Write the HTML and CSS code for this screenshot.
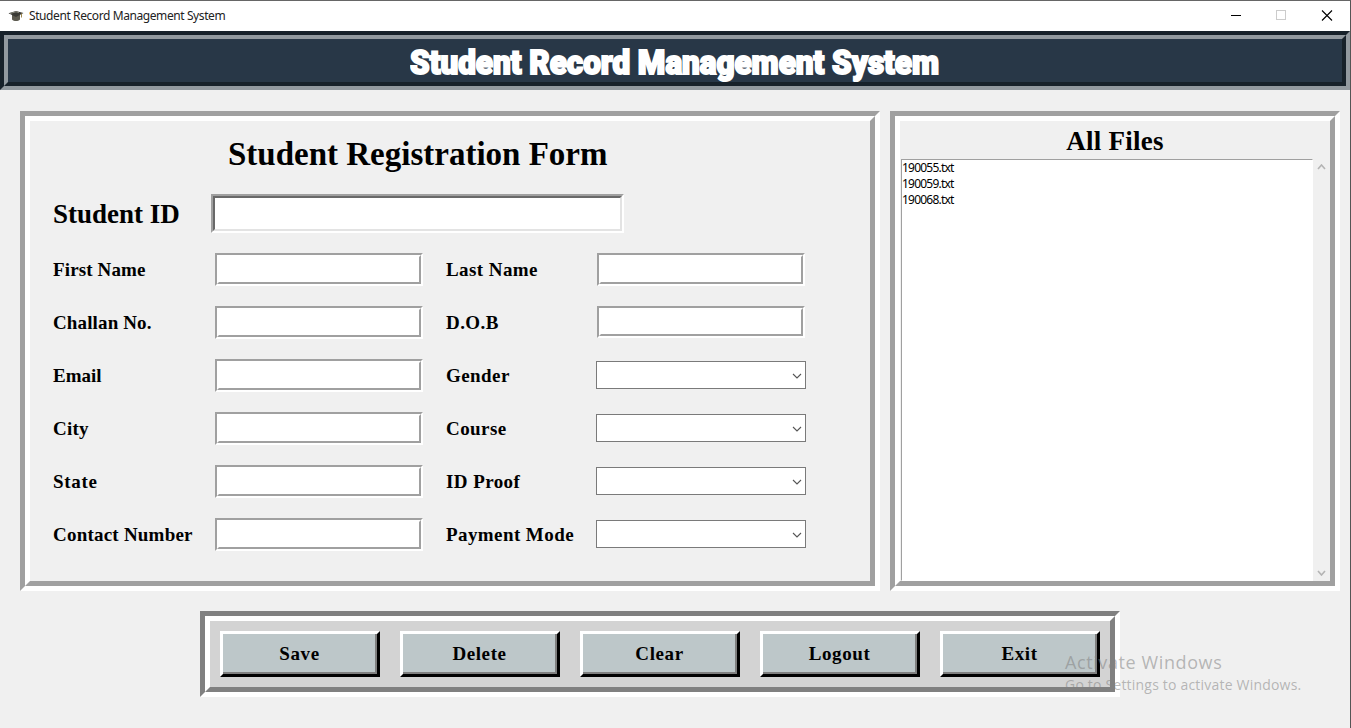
FILE: index.html
```html
<!DOCTYPE html>
<html lang="en">
<head>
<meta charset="utf-8">
<title>Student Record Management System</title>
<link rel="stylesheet" href="styles.css">
</head>
<body>
<div class="window">
  <div class="titlebar">
    <svg class="app-icon" width="16" height="13" viewBox="0 0 16 13"><path d="M4 5v4.500c2 2 6 2 8 0V5z" fill="#5d5b50"/><path d="M.5 3.300 8 1l7.500 2L8 7z" fill="#3a3a35"/><path d="M2 3.500 8 1.800l3 .8" stroke="#85857a" fill="none"/><path d="M13.500 3.500v4" stroke="#a08a50"/></svg>
    <span class="app-name">Student Record Management System</span>
    <svg class="controls" width="120" height="30" viewBox="0 0 120 30" fill="none" shape-rendering="crispEdges"><path d="M1 14.500h10" stroke="#000"/><path d="M46.500 9.500h9v9h-9z" stroke="#ccc"/><path d="m92 9.500 10 10m0-10-10 10" stroke="#000" stroke-width="1.100" shape-rendering="auto"/></svg>
  </div>
  <header class="banner"><div class="banner-in"><h1>Student Record Management System</h1></div></header>
  <main class="panels">
    <section class="groove form-panel"><div class="groove-in">
      <h2 class="form-title"><span>Student Registration Form</span></h2>
      <div class="id-row"><label class="id-label"><span>Student ID</span></label><div class="id-input"><div></div></div></div>
      <div class="fields">
        <label class="w1">First Name</label><div class="entry"><div></div></div><label class="w3">Last Name</label><div class="entry right"><div></div></div>
        <label class="w1">Challan No.</label><div class="entry"><div></div></div><label class="w3">D.O.B</label><div class="entry right short"><div></div></div>
        <label>Email</label><div class="entry"><div></div></div><label class="w3">Gender</label><div class="combo"><svg width="10" height="6" viewBox="0 0 10 6"><path d="m1 1 4 4 4-4"/></svg></div>
        <label class="w2">City</label><div class="entry"><div></div></div><label class="w3">Course</label><div class="combo"><svg width="10" height="6" viewBox="0 0 10 6"><path d="m1 1 4 4 4-4"/></svg></div>
        <label class="w4">State</label><div class="entry"><div></div></div><label class="w3">ID Proof</label><div class="combo"><svg width="10" height="6" viewBox="0 0 10 6"><path d="m1 1 4 4 4-4"/></svg></div>
        <label class="w2">Contact Number</label><div class="entry"><div></div></div><label class="w3">Payment Mode</label><div class="combo"><svg width="10" height="6" viewBox="0 0 10 6"><path d="m1 1 4 4 4-4"/></svg></div>
      </div>
    </div></section>
    <section class="groove files-panel"><div class="groove-in">
      <h2 class="files-title"><span>All Files</span></h2>
      <div class="list-wrap">
        <ul class="list"><li>190055.txt</li><li>190059.txt</li><li>190068.txt</li></ul>
        <div class="scroll"><svg width="9" height="6" viewBox="0 0 9 6"><path d="m1 5 3.500-4L8 5"/></svg><svg width="9" height="6" viewBox="0 0 9 6"><path d="m1 1 3.500 4L8 1"/></svg></div>
      </div>
    </div></section>
  </main>
  <footer class="groove actions"><div class="groove-in">
    <button>Save</button><button>Delete</button><button>Clear</button><button>Logout</button><button>Exit</button>
  </div></footer>
</div>
<div class="watermark"><p class="wm-title">Activate Windows</p><p class="wm-text">Go to Settings to activate Windows.</p></div>
</body>
</html>
```
FILE: styles.css
```css
* { box-sizing: border-box; }
body { margin: 0; width: 1351px; height: 728px; overflow: hidden; background: #f0f0f0; position: relative; }
h1, h2, p, ul { margin: 0; padding: 0; }
.window { width: 1351px; height: 728px; border-top: 1px solid #666; border-right: 1px solid #555; font-family: "Liberation Serif", serif; color: #000; }
.titlebar { height: 30px; background: #fff; display: flex; align-items: center; padding-left: 8px; }
.app-icon { flex: none; }
.app-name { margin-left: 5px; font: 12px/16px "Noto Sans", sans-serif; letter-spacing: -0.41px; color: #222; flex: 1; }
.controls { flex: none; }
.banner { height: 59px; border: 4px solid; border-color: #17212a #92999f #92999f #17212a; }
.banner-in { height: 51px; border: 4px solid; border-color: #92999f #17212a #17212a #92999f; background: #283747; display: flex; justify-content: center; align-items: center; }
h1 { font: 900 34px/39px Roboto, sans-serif; color: #fff; white-space: nowrap; -webkit-text-stroke: 2px #fff; transform: scaleX(.923); padding-top: 3px; }
.panels { display: flex; gap: 10px; padding: 21px 0 0 20px; }
.groove { border: 5px solid; border-color: #a0a0a0 #fff #fff #a0a0a0; }
.groove-in { border: 5px solid; border-color: #fff #a0a0a0 #a0a0a0 #fff; height: 100%; }
.form-panel { width: 860px; height: 480px; }
.form-title { height: 73px; padding: 14px 0 0 198px; font-size: 33px; line-height: 38px; white-space: nowrap; }
.id-row { display: flex; height: 59px; padding-left: 23px; }
.id-label { width: 158px; font-size: 27px; line-height: 40px; font-weight: bold; white-space: nowrap; }
.id-input { width: 413px; height: 39px; border: 2px solid; border-color: #a0a0a0 #fff #fff #a0a0a0; }
.id-input div { height: 35px; background: #fff; border: 2px solid; border-color: #696969 #e3e3e3 #e3e3e3 #696969; }
.fields { display: grid; grid-template-columns: 162px 231px 150px 210px; grid-auto-rows: 53px; padding-left: 23px; }
.fields label { font-size: 19px; line-height: 33px; font-weight: bold; white-space: nowrap; }
.fields .w1 { letter-spacing: .13px; }
.fields .w2 { letter-spacing: .22px; }
.fields .w3 { letter-spacing: .42px; }
.fields .w4 { letter-spacing: .7px; }
.entry { width: 208px; height: 33px; border: 2px solid; border-color: #a0a0a0 #fff #fff #a0a0a0; }
.entry div { height: 100%; background: #fff; border: 2px solid; border-color: #fff #a0a0a0 #a0a0a0 #fff; }
.right { margin-left: 1px; }
.short { height: 32px; }
.combo { width: 210px; height: 28px; margin-top: 2px; border: 1px solid #7a7a7a; background: #fff; display: flex; justify-content: flex-end; align-items: center; padding: 1px 3px 0 0; }
.combo path { fill: none; stroke: #555; stroke-width: 1.1; }
.files-panel { width: 450px; height: 480px; }
.files-title { height: 38px; text-align: center; padding-top: 5px; font-size: 27px; line-height: 31px; letter-spacing: .25px; }
.list-wrap { display: flex; height: 422px; padding-left: 1px; }
.list { width: 412px; list-style: none; background: #fff; border: 1px solid; border-color: #a0a0a0 #fff #fff #a0a0a0; font: 12px/16px "Noto Sans", sans-serif; letter-spacing: -0.78px; }
.scroll { flex: 1; background: #f0f0f0; display: flex; flex-direction: column; justify-content: space-between; align-items: center; padding: 5px 0; }
.scroll path { fill: none; stroke: #b4b4b4; stroke-width: 1.6; }
.actions { width: 920px; height: 86px; margin: 20px 0 0 200px; border-color: #808080 #fff #fff #808080; }
.actions .groove-in { border-color: #fff #808080 #808080 #fff; background: #d3d3d3; display: flex; gap: 20px; padding: 10px; }
button { width: 160px; height: 46px; border: 3px solid; border-color: #fff #000 #000 #fff; border-radius: 0; padding: 0 1px 0 0; background: #bdc7c9; box-shadow: inset -2px -2px #7f7f7f; font: bold 19px/36px "Liberation Serif", serif; color: #000; letter-spacing: .6px; }
.watermark { position: absolute; left: 1065px; top: 650px; font-family: "Open Sans", sans-serif; color: rgba(130,130,130,.55); white-space: nowrap; }
.wm-title { font-size: 18px; line-height: 25px; letter-spacing: .6px; }
.wm-text { font-size: 14px; line-height: 20px; letter-spacing: .2px; }
```
